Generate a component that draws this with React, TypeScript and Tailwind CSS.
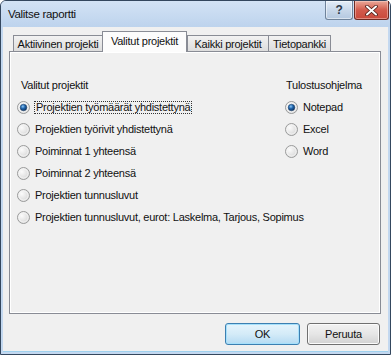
import React from 'react';

// Vista-tyylinen radiopainike
const Radio: React.FC<{ checked?: boolean }> = ({ checked }) => (
  <svg width="13" height="13" viewBox="0 0 13 13" className="shrink-0">
    <defs>
      <radialGradient id="rbg" cx="0.35" cy="0.35" r="0.75">
        <stop offset="0" stopColor="#fbfbfb" />
        <stop offset="1" stopColor="#d4d4d4" />
      </radialGradient>
      <radialGradient id="rdot" cx="0.4" cy="0.35" r="0.7">
        <stop offset="0" stopColor="#8fc8f5" />
        <stop offset="0.45" stopColor="#1f65ad" />
        <stop offset="1" stopColor="#0c2d58" />
      </radialGradient>
    </defs>
    <circle cx="6.5" cy="6.5" r="6" fill="url(#rbg)" stroke="#9a9b9b" strokeWidth="1" />
    <circle cx="6.5" cy="6.5" r="4.6" fill="none" stroke="#f6f6f6" strokeWidth="0.8" />
    {checked && <circle cx="6.5" cy="6.5" r="3.3" fill="url(#rdot)" stroke="#1b3e66" strokeWidth="0.5" />}
  </svg>
);

const RadioRow: React.FC<{ label: string; checked?: boolean; focused?: boolean }> = ({
  label,
  checked,
  focused,
}) => (
  <div className="flex h-[22px] items-center">
    <Radio checked={checked} />
    <span
      className={
        focused
          ? 'ml-[4px] border border-dotted border-[#333] px-[1px] leading-[11px] whitespace-nowrap'
          : 'ml-[5px] leading-[11px] whitespace-nowrap'
      }
    >
      {label}
    </span>
  </div>
);

const tabs = [
  { label: 'Aktiivinen projekti', w: 'w-[90px]' },
  { label: 'Valitut projektit', w: 'w-[85px]', active: true },
  { label: 'Kaikki projektit', w: 'w-[82px]' },
  { label: 'Tietopankki', w: 'w-[63px]' },
];

const reports = [
  'Projektien työmäärät yhdistettynä',
  'Projektien työrivit yhdistettynä',
  'Poiminnat 1 yhteensä',
  'Poiminnat 2 yhteensä',
  'Projektien tunnusluvut',
  'Projektien tunnusluvut, eurot: Laskelma, Tarjous, Sopimus',
];

const App: React.FC = () => {
  return (
    <div className="w-[391px] h-[355px] overflow-hidden bg-white">
      <div className="flex h-full w-full flex-col rounded-t-[6px] border border-[#34475e] bg-[#c3d8f0] font-['Liberation_Sans',Arial,sans-serif] text-[11px] tracking-[-0.25px] text-[#111]">
        {/* Otsikkopalkki */}
        <div className="flex h-[26px] items-start rounded-t-[5px] bg-gradient-to-b from-[#d3e3f5] to-[#bdd3ed] pl-[7px] pr-[1px]">
          <span className="mt-[7px] text-[11.5px] leading-[12px] tracking-[-0.3px] text-[#111]">Valitse raportti</span>
          <div className="ml-auto flex gap-[1px]">
            <div className="flex h-[19px] w-[28px] items-center justify-center rounded-b-[3px] border border-t-0 border-[#6f839b] bg-gradient-to-b from-[#e4edf8] via-[#c9d8ea] to-[#b4c8e0] shadow-[inset_0_0_0_1px_rgba(255,255,255,0.5)]">
              <span className="text-[12px] font-bold leading-[12px] text-[#2d3a4a]">?</span>
            </div>
            <div className="flex h-[19px] w-[35px] items-center justify-center rounded-b-[3px] border border-t-0 border-[#6e2a22] bg-gradient-to-b from-[#e9a899] via-[#d25a4c] to-[#c9493b] shadow-[inset_0_0_0_1px_rgba(255,220,210,0.45)]">
              <svg width="13" height="11" viewBox="0 0 13 11">
                <path d="M2 1.5 L11 9.5 M11 1.5 L2 9.5" stroke="#4a1a14" strokeWidth="3.6" strokeLinecap="round" />
                <path d="M2 1.5 L11 9.5 M11 1.5 L2 9.5" stroke="#ffffff" strokeWidth="2" strokeLinecap="round" />
              </svg>
            </div>
          </div>
        </div>

        {/* Asiakasalue */}
        <div className="mx-[2px] mb-[2px] flex flex-1 flex-col border-b-[1px] border-[#9fd1ee] bg-[#f0f0f0]">
          {/* Välilehdet */}
          <div className="relative z-10 ml-[10px] mt-[4px] flex h-[20px] items-end">
            {tabs.map((t) =>
              t.active ? (
                <div
                  key={t.label}
                  className={`${t.w} -mb-px flex h-[21px] items-start justify-center border border-b-0 border-[#898c95] bg-[#fcfcfc] pt-[3px] leading-[12px]`}
                >
                  {t.label}
                </div>
              ) : (
                <div
                  key={t.label}
                  className={`${t.w} -mr-px flex h-[16px] items-start justify-center whitespace-nowrap border border-b-0 border-[#898c95] bg-gradient-to-b from-[#f2f2f2] to-[#dddddd] pt-[2px] leading-[12px]`}
                >
                  {t.label}
                </div>
              )
            )}
          </div>

          {/* Välilehden sisältö */}
          <div className="ml-[6px] h-[263px] w-[372px] border border-[#898c95] bg-[#f0f0f0] shadow-[inset_0_0_0_1px_#ffffff]">
            <div className="flex pt-[22px]">
              <div className="ml-[7px] flex w-[268px] flex-col">
                <div className="flex h-[22px] items-center pl-[4px]">Valitut projektit</div>
                {reports.map((r, i) => (
                  <RadioRow key={r} label={r} checked={i === 0} focused={i === 0} />
                ))}
              </div>
              <div className="flex flex-col">
                <div className="flex h-[22px] items-center pl-[1px]">Tulostusohjelma</div>
                <RadioRow label="Notepad" checked />
                <RadioRow label="Excel" />
                <RadioRow label="Word" />
              </div>
            </div>
          </div>

          {/* Painikkeet */}
          <div className="mt-[9px] flex justify-end gap-[7px] pr-[8px]">
            <button className="flex h-[22px] w-[75px] items-center justify-center rounded-[3px] border border-[#3c7fb1] bg-gradient-to-b from-[#e5f4fc] via-[#d4ebf8] to-[#b5dbf3] shadow-[inset_0_0_0_1px_#a6e0fb] leading-[12px]">
              OK
            </button>
            <button className="flex h-[22px] w-[73px] items-center justify-center rounded-[3px] border border-[#707070] bg-gradient-to-b from-[#f2f2f2] via-[#e6e6e6] to-[#d2d2d2] shadow-[inset_0_0_0_1px_#fbfbfb] leading-[12px]">
              Peruuta
            </button>
          </div>
        </div>
      </div>
    </div>
  );
};

export default App;
